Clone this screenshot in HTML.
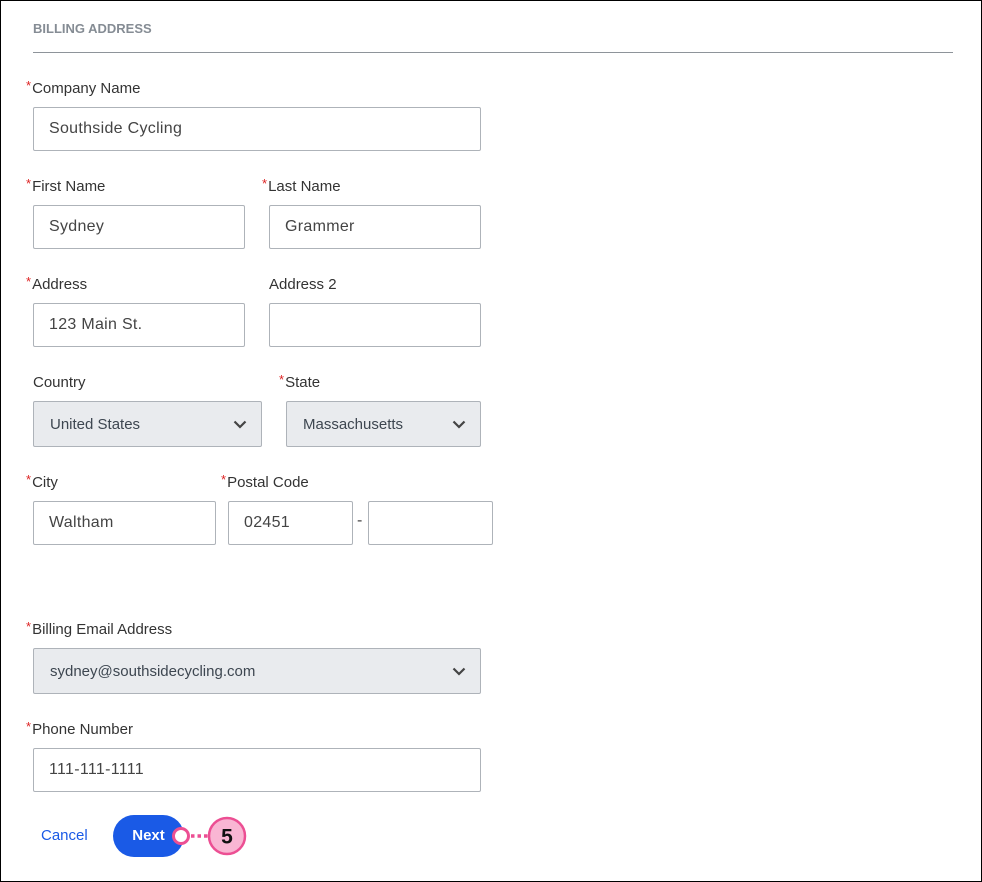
<!DOCTYPE html><html><head><style>
body{margin:0;width:982px;height:882px;position:relative;font-family:"Liberation Sans",sans-serif;background:#fff;overflow:hidden}
.frame{position:absolute;left:0;top:0;width:980px;height:880px;border:1px solid #000}
.a{position:absolute}
.lb{position:absolute;font-size:15px;color:#333;}
.lb i{font-style:normal;color:#d22;font-size:13px;position:relative;top:-3px;margin-right:1px}
.in{position:absolute;box-sizing:border-box;border:1px solid #aeb3b9;border-radius:2px;background:#fff;font-size:16px;color:#444;padding-left:15px;display:flex;align-items:center;letter-spacing:.3px}
.sel{background:#e9ebee;font-size:15px;color:#3d4650;padding-left:16px;letter-spacing:0}
.sel svg{position:absolute;right:14px;top:50%;margin-top:-4px}
</style></head><body><div class="frame"></div>
<div class="a" style="left:33px;top:21px;font-size:13px;font-weight:bold;color:#858c94">BILLING ADDRESS</div>
<div class="a" style="left:33px;top:52px;width:920px;height:1px;background:#8e949a"></div>
<div class="lb" style="left:26px;top:80px"><i>*</i>Company Name</div>
<div class="in" style="left:33px;top:107px;width:448px;height:44px">Southside Cycling</div>
<div class="lb" style="left:26px;top:178px"><i>*</i>First Name</div>
<div class="lb" style="left:262px;top:178px"><i>*</i>Last Name</div>
<div class="in" style="left:33px;top:205px;width:212px;height:44px">Sydney</div>
<div class="in" style="left:269px;top:205px;width:212px;height:44px">Grammer</div>
<div class="lb" style="left:26px;top:276px"><i>*</i>Address</div>
<div class="lb" style="left:269px;top:276px">Address 2</div>
<div class="in" style="left:33px;top:303px;width:212px;height:44px">123 Main St.</div>
<div class="in" style="left:269px;top:303px;width:212px;height:44px"></div>
<div class="lb" style="left:33px;top:374px">Country</div>
<div class="lb" style="left:279px;top:374px"><i>*</i>State</div>
<div class="in sel" style="left:33px;top:401px;width:229px;height:46px">United States<svg width="14" height="9" viewBox="0 0 14 9"><path d="M1.5 1.5L7 7l5.5-5.5" fill="none" stroke="#444" stroke-width="2.2"/></svg></div>
<div class="in sel" style="left:286px;top:401px;width:195px;height:46px">Massachusetts<svg width="14" height="9" viewBox="0 0 14 9"><path d="M1.5 1.5L7 7l5.5-5.5" fill="none" stroke="#444" stroke-width="2.2"/></svg></div>
<div class="lb" style="left:26px;top:474px"><i>*</i>City</div>
<div class="lb" style="left:221px;top:474px"><i>*</i>Postal Code</div>
<div class="in" style="left:33px;top:501px;width:183px;height:44px">Waltham</div>
<div class="in" style="left:228px;top:501px;width:125px;height:44px">02451</div>
<div class="a" style="left:357px;top:512px;font-size:16px;color:#444">-</div>
<div class="in" style="left:368px;top:501px;width:125px;height:44px"></div>
<div class="lb" style="left:26px;top:621px"><i>*</i>Billing Email Address</div>
<div class="in sel" style="left:33px;top:648px;width:448px;height:46px">sydney@southsidecycling.com<svg width="14" height="9" viewBox="0 0 14 9"><path d="M1.5 1.5L7 7l5.5-5.5" fill="none" stroke="#444" stroke-width="2.2"/></svg></div>
<div class="lb" style="left:26px;top:721px"><i>*</i>Phone Number</div>
<div class="in" style="left:33px;top:748px;width:448px;height:44px">111-111-1111</div>
<div class="a" style="left:41px;top:827px;font-size:15px;color:#1a5ae6">Cancel</div>
<div class="a" style="left:113px;top:815px;width:71px;height:42px;border-radius:21px;background:#1a5ae6;color:#fff;font-weight:bold;font-size:15px;line-height:42px;text-align:center">Next</div>
<svg class="a" style="left:170px;top:815px" width="80" height="44"><circle cx="11" cy="21" r="7.5" fill="#fff" stroke="#ec4f93" stroke-width="3"/><path d="M21 21H38" stroke="#ec4f93" stroke-width="3.5" stroke-dasharray="3.5 3"/><circle cx="57" cy="21" r="18" fill="#f9b6d3" stroke="#ec4f93" stroke-width="2.5"/><text x="57" y="28.5" font-family="Liberation Sans" font-weight="bold" font-size="21" text-anchor="middle" fill="#111">5</text></svg>
</body></html>
